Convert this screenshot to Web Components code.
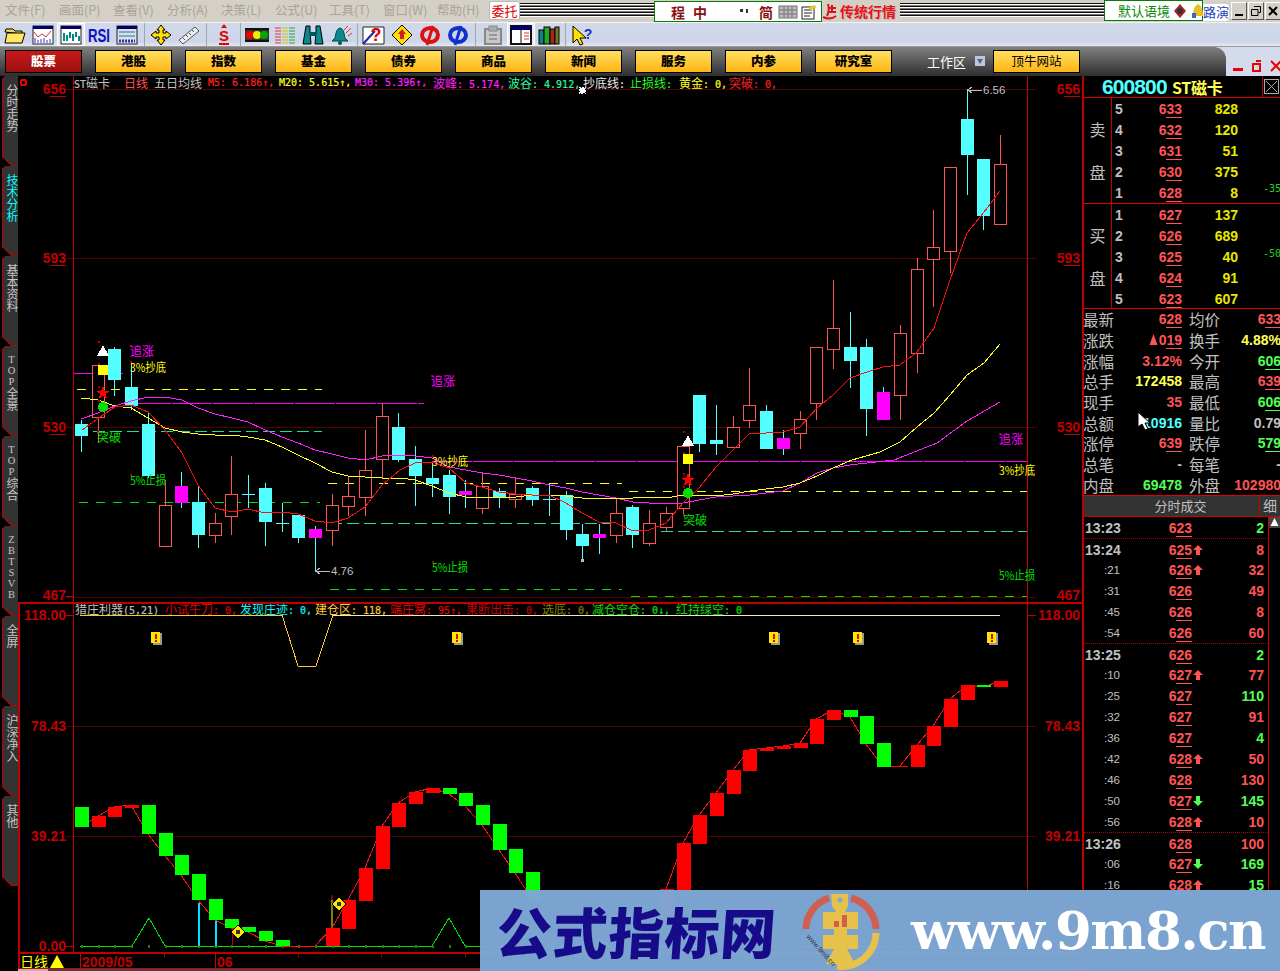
<!DOCTYPE html>
<html lang="zh">
<head>
<meta charset="utf-8">
<title>行情</title>
<style>
  html, body { margin: 0; height: 971px; overflow: hidden; background: #000; }
</style>
</head>
<body>
<tdx-app>
  <menu-bar slot="menu">
    <menu-item>文件(F)</menu-item><menu-item>画面(P)</menu-item><menu-item>查看(V)</menu-item>
    <menu-item>分析(A)</menu-item><menu-item>决策(L)</menu-item><menu-item>公式(U)</menu-item>
    <menu-item>工具(T)</menu-item><menu-item>窗口(W)</menu-item><menu-item last>帮助(H)</menu-item>
  </menu-bar>
  <tool-bar slot="tools">
    <tool-icon name="folder"></tool-icon><tool-icon name="kline"></tool-icon><tool-icon name="bars" pressed></tool-icon>
    <tool-icon name="rsi"></tool-icon><tool-icon name="table"></tool-icon><tool-sep></tool-sep>
    <tool-icon name="cross"></tool-icon><tool-icon name="ruler"></tool-icon><tool-sep w="7"></tool-sep>
    <tool-icon name="dollar"></tool-icon><tool-sep w="5"></tool-sep>
    <tool-icon name="lights"></tool-icon><tool-icon name="hatch"></tool-icon><tool-icon name="binoculars"></tool-icon>
    <tool-icon name="bell"></tool-icon><tool-sep w="5"></tool-sep>
    <tool-icon name="question"></tool-icon><tool-icon name="diamond"></tool-icon><tool-icon name="phired"></tool-icon>
    <tool-icon name="phiblue"></tool-icon><tool-sep w="7"></tool-sep>
    <tool-icon name="clip"></tool-icon><tool-icon name="window" pressed></tool-icon><tool-icon name="books"></tool-icon><tool-sep w="5"></tool-sep>
    <tool-icon name="help"></tool-icon>
  </tool-bar>
  <nav-bar slot="nav">
    <nav-button active>股票</nav-button><nav-button>港股</nav-button><nav-button>指数</nav-button>
    <nav-button>基金</nav-button><nav-button>债券</nav-button><nav-button>商品</nav-button>
    <nav-button>新闻</nav-button><nav-button>服务</nav-button><nav-button>内参</nav-button>
    <nav-button>研究室</nav-button>
  </nav-bar>
  <side-tabs slot="tabs">
    <side-tab>分时走势</side-tab><side-tab active>技术分析</side-tab><side-tab>基本资料</side-tab>
    <side-tab>TOP全景</side-tab><side-tab>TOP综合</side-tab><side-tab>ZBTSVB</side-tab>
    <side-tab>全屏</side-tab><side-tab>沪深净入</side-tab><side-tab>其他</side-tab>
  </side-tabs>
  <candle-chart slot="main"></candle-chart>
  <index-chart slot="sub"></index-chart>
  <date-bar slot="dates"></date-bar>
  <quote-panel slot="quote"></quote-panel>
  <watermark-banner slot="banner"></watermark-banner>
</tdx-app>

<script>
const CJK = '"Noto Sans CJK SC", sans-serif';

// tiny base: every element sets its shadow html in render()
class Box extends HTMLElement {
  constructor() {
    super();
    this.attachShadow({ mode: 'open' });
  }
  connectedCallback() {
    this.shadowRoot.innerHTML = this.render();
  }
}

/* ---------- shell ---------- */
class TdxApp extends Box {
  render() {
    return `<style>
      :host { display: grid; position: relative; width: 1280px; height: 971px; overflow: hidden; background: #000;
        grid-template-rows: 23px 24px 29px 1fr; font-family: ${CJK}; }
      .body { display: grid; grid-template-columns: 18px 1064px 198px; min-height: 0; }
      .charts { display: grid; grid-template-rows: 526px 350px 16px 3px; min-width: 0; }
      .banner { position: absolute; left: 480px; top: 890px; }
      .strip { background: #444; border-top: 1px solid #c00; display: flex; }
      .strip i { width: 30px; background: #b8b8b8; }
    </style>
    <slot name="menu"></slot><slot name="tools"></slot><slot name="nav"></slot>
    <div class="body">
      <slot name="tabs"></slot>
      <div class="charts">
        <slot name="main"></slot><slot name="sub"></slot><slot name="dates"></slot>
        <div class="strip"><i></i></div>
      </div>
      <slot name="quote"></slot>
    </div>
    <div class="banner"><slot name="banner"></slot></div>`;
  }
}

/* ---------- top menu ---------- */
class MenuBar extends Box {
  render() {
    const stripes = 'repeating-linear-gradient(#111 0 1px, #fff 1px 2px, #777 2px 3px)';
    return `<style>
      :host { display: flex; align-items: stretch; height: 23px; background: #d4d0c8; border-bottom: 1px solid #f4f4f4; box-sizing: border-box; padding-left: 5px; }
      .tab { width: 31px; margin: 1px 0 2px; background: #fff; border: 1px solid #bbb; border-radius: 3px 3px 0 0; color: #e00000; font-size: 13px; line-height: 18px; text-align: center; box-sizing: border-box; }
      .grip { flex: 1; margin: 3px 0 5px; background: ${stripes}; min-width: 0; }
      .grip.a { flex: none; width: 134px; }
      .lang { width: 168px; height: 21px; margin-top: 1px; box-sizing: border-box; background: #fff; border: 1px solid #0a7a0a; display: flex; align-items: center; color: #8a0f0f; font: bold 14px ${CJK}; }
      .lang span { width: 22px; text-align: center; flex: none; }
      .lang svg { flex: none; }
      .logo { width: 78px; color: #e11; font: bold 14px/20px ${CJK}; white-space: nowrap; text-shadow: 1px 1px 0 #bbb; display: flex; align-items: center; gap: 3px; }
      .ctx { width: 99px; height: 21px; box-sizing: border-box; background: #fff; border: 1px solid #0a7a0a; color: #0a8a0a; font-size: 13px; line-height: 19px; padding-left: 13px; display: flex; gap: 2px; white-space: nowrap; }
      .ctx svg { flex: none; margin-top: 2px; }
      .road { width: 26px; margin-top: 4px; height: 17px; overflow: hidden; background: #fff; color: #1a3fc0; font-size: 13px; line-height: 16px; border-radius: 0 3px 3px 0; text-align: right; white-space: nowrap; }
      .win { width: 16px; margin: 2px 0 2px 1px; box-sizing: border-box; background: #d4d0c8; border: 1px solid; border-color: #fff #555 #555 #fff; display: flex; align-items: center; justify-content: center; }
    </style>
    <slot></slot>
    <div class="tab">委托</div>
    <div class="grip a"></div>
    <div class="lang">
      <span style="margin-left:12px">程</span><span>中</span>
      <svg width="22" height="16" viewBox="0 0 22 16"><path d="M13 1a7 7 0 0 1-7 12A7 7 0 0 0 13 1z" fill="#111"/></svg>
      <svg width="22" height="16" viewBox="0 0 22 16"><path d="M7 5h3v3H7zM13 5h2v4h-2z" fill="#333"/></svg>
      <span>简</span>
      <svg width="22" height="16" viewBox="0 0 22 16"><rect x="2" y="2" width="18" height="12" fill="#bbb" stroke="#777"/><path d="M2 6h18M2 10h18M7 2v12M11 2v12M15 2v12" stroke="#777"/></svg>
      <svg width="20" height="16" viewBox="0 0 20 16"><rect x="3" y="3" width="12" height="12" fill="#fff" stroke="#222"/><path d="M5 6h8M5 9h8M5 12h6" stroke="#222"/><path d="M9 4l6-3 3 2-6 3z" fill="#e8c820"/></svg>
    </div>
    <div class="logo"><svg width="15" height="18" viewBox="0 0 15 18"><path d="M1 15c4 2 9 2 13-1M6 2c1 3 1 8-1 12M10 3v8M7 6h7M7 10h7" fill="none" stroke="#d11" stroke-width="2"/></svg><span>传统行情</span></div>
    <div class="grip"></div>
    <div class="ctx">默认语境
      <svg width="16" height="16" viewBox="0 0 16 16"><path d="M8 1l6 7-6 7-6-7z" fill="#a22"/><circle cx="8" cy="8" r="3" fill="#333"/></svg>
      <svg width="16" height="16" viewBox="0 0 16 16"><path d="M8 1c4 2 5 7 5 12H3c0-5 1-10 5-12z" fill="#e8c020"/><rect x="2" y="10" width="4" height="5" fill="#36c"/></svg>
    </div>
    <div class="road">路演</div>
    <div class="win" style="margin-left:2px"><svg width="10" height="10"><path d="M1 8h8v2H1z" fill="#000"/></svg></div>
    <div class="win"><svg width="10" height="10"><path d="M3 .5h6.5v6h-2M.5 3.5h6.5v6H.5z" fill="none" stroke="#000"/></svg></div>
    <div class="win" style="margin-right:-1px"><svg width="10" height="10"><path d="M1 1l8 8M9 1l-8 8" stroke="#000" stroke-width="2"/></svg></div>`;
  }
}
class MenuItem extends Box {
  render() {
    return `<style>:host { display: block; width: ${this.hasAttribute('last') ? 52 : 54}px; color: #a8a498; font-size: 12.5px; line-height: 20px; white-space: nowrap; }</style><slot></slot>`;
  }
}

/* ---------- toolbar ---------- */
const ICONS = {
  folder: '<path d="M2 8l1-3h7l2 2h7v3z" fill="#e8d860" stroke="#000"/><path d="M2 19l2-10h18l-3 10z" fill="#ffe860" stroke="#000"/>',
  kline: '<rect x="2" y="2" width="20" height="18" fill="#fff" stroke="#222"/><rect x="2" y="2" width="20" height="3" fill="#006"/><path d="M3 8l4 5 4-3 4 3 5-6" fill="none" stroke="#c33"/><path d="M4 14v5M7 16v3M10 15v4M13 14v5M16 16v3M19 15v4" stroke="#33c"/>',
  bars: '<rect x="2" y="2" width="20" height="18" fill="#fff" stroke="#222"/><rect x="2" y="2" width="20" height="3" fill="#006"/><path d="M5 9v8M8 11v6M11 8v6M14 10v7M17 8v5M20 12v5" stroke="#088" stroke-width="2"/>',
  rsi: '<text x="1" y="18" font-family="Liberation Sans" font-weight="bold" font-size="19" fill="#1010c0" textLength="22" lengthAdjust="spacingAndGlyphs">RSI</text>',
  table: '<rect x="2" y="2" width="20" height="18" fill="#dde" stroke="#222"/><rect x="2" y="2" width="20" height="3" fill="#006"/><path d="M4 8h16M4 12h16" stroke="#088"/><path d="M4 17h16" stroke="#33a" stroke-width="3" stroke-dasharray="2 1"/>',
  cross: '<path d="M12 1l4 5h-2v3h3V7l5 4-5 4v-2h-3v3h2l-4 5-4-5h2v-3H7v2l-5-4 5-4v2h3V6H8z" fill="#ffe000" stroke="#000"/>',
  ruler: '<path d="M2 16L18 3l4 4L6 20z" fill="#eee" stroke="#555"/><path d="M6 14l2 2M9 11l2 2M12 9l2 2M15 6l2 2" stroke="#555"/>',
  dollar: '<path d="M12 0l3 4h-6z" fill="#e00"/><text x="12" y="17" text-anchor="middle" font-family="Liberation Sans" font-weight="bold" font-size="15" fill="#e00000">S</text><path d="M7 20h10" stroke="#e00" stroke-width="2"/>',
  lights: '<rect x="0" y="4" width="24" height="2" fill="#111"/><rect x="0" y="16" width="24" height="2" fill="#111"/><rect x="0" y="6" width="24" height="10" fill="#333"/><circle cx="5" cy="11" r="4" fill="#e00"/><circle cx="12" cy="11" r="4" fill="#ee0"/><circle cx="19" cy="11" r="4" fill="#0a0"/>',
  hatch: '<path d="M3 3v17M5 3v17M7 3v17" stroke="#e33" stroke-dasharray="2 1"/><path d="M10 3v17M12 3v17M14 3v17" stroke="#cc0" stroke-dasharray="2 1"/><path d="M17 3v17M19 3v17M21 3v17" stroke="#2a2" stroke-dasharray="2 1"/>',
  binoculars: '<path d="M5 2h4v6l1 12H2L4 8z" fill="#0a8a90" stroke="#000"/><path d="M15 2h4l1 6 2 12h-8l1-12z" fill="#0a8a90" stroke="#000"/><rect x="9" y="8" width="6" height="4" fill="#055"/>',
  bell: '<path d="M11 4c-4 1-4 6-5 10l-3 3h16l-3-3c-1-4-1-9-5-10z" fill="#0a8a90" stroke="#044"/><circle cx="11" cy="19" r="2" fill="#055"/><path d="M15 6l4-4M17 9l5-5M19 12l4-3" stroke="#d33"/>',
  question: '<path d="M1 20V3h21v17z" fill="#fff" stroke="#222"/><path d="M1 20l12-13" stroke="#22a" stroke-width="2"/><text x="14" y="17" text-anchor="middle" font-family="Liberation Sans" font-weight="bold" font-size="18" fill="#e00000">?</text>',
  diamond: '<path d="M12 1l10 10-10 10L2 11z" fill="#ffe000" stroke="#000"/><path d="M12 5l4 5h-2v5h-4v-5H8z" fill="#d02020"/>',
  phired: '<ellipse cx="12" cy="11" rx="8" ry="7" fill="none" stroke="#e01010" stroke-width="4"/><path d="M15 2L9 21" stroke="#e01010" stroke-width="3"/>',
  phiblue: '<ellipse cx="12" cy="11" rx="8" ry="7" fill="none" stroke="#1030d0" stroke-width="4"/><path d="M15 2L9 21" stroke="#1030d0" stroke-width="3"/>',
  clip: '<path d="M4 5h16v15H4z" fill="#c8c8c8" stroke="#888" stroke-width="2"/><rect x="8" y="2" width="8" height="5" fill="#aaa" stroke="#888"/><path d="M8 11h8M8 15h8" stroke="#999" stroke-width="2"/>',
  window: '<rect x="2" y="2" width="20" height="18" fill="#fff" stroke="#111" stroke-width="2"/><rect x="2" y="2" width="20" height="4" fill="#006"/><path d="M15 9h5M15 12h5M15 15h5" stroke="#d33"/><path d="M12 6v14" stroke="#111"/>',
  books: '<rect x="2" y="6" width="5" height="14" fill="#088" stroke="#000"/><rect x="7" y="3" width="6" height="17" fill="#2a2" stroke="#000"/><rect x="13" y="5" width="5" height="15" fill="#a22" stroke="#000"/><rect x="18" y="3" width="4" height="17" fill="#772" stroke="#000"/>',
  help: '<path d="M3 2v17l4-4 3 6 3-1-3-6h6z" fill="#ffe000" stroke="#000"/><text x="18" y="15" text-anchor="middle" font-family="Liberation Sans" font-weight="bold" font-size="14" fill="#1030c0">?</text>'
};
class ToolBar extends Box {
  render() {
    return `<style>:host { display: flex; align-items: stretch; height: 24px; padding-left: 1px; box-sizing: border-box;
      background: linear-gradient(#d0d8ea, #cdd5e8 80%, #e6e8f0); border-bottom: 1px solid #999; }</style><slot></slot>`;
  }
}
class ToolIcon extends Box {
  render() {
    const pressed = this.hasAttribute('pressed');
    return `<style>:host { display: flex; width: 28px; align-items: center; justify-content: center; box-sizing: border-box;
      ${pressed ? 'background:#e8ecf2; border:1px solid #fff;' : ''} }</style>
      <svg width="24" height="22" viewBox="0 0 24 22">${ICONS[this.getAttribute('name')] || ''}</svg>`;
  }
}
class ToolSep extends Box {
  render() {
    return `<style>:host { display: block; width: ${this.getAttribute('w') || 6}px; }
      i { display: block; width: 1px; height: 100%; background: #9aa; margin: 0 auto; }</style><i></i>`;
  }
}

/* ---------- nav bar ---------- */
class NavBar extends Box {
  render() {
    return `<style>
      :host { display: flex; height: 29px; background: #d4dbec; }
      .strip { flex: 1; display: flex; align-items: center; gap: 13px; padding-left: 5px; padding-bottom: 1px; box-sizing: border-box; border-top-right-radius: 12px;
        background: linear-gradient(#808080, #2e2e2e); color: #fff; font-size: 13px; }
      .zone { width: 58px; margin-left: 22px; margin-right: -13px; white-space: nowrap; display: flex; align-items: center; gap: 9px; }
      .caps { width: 54px; display: flex; align-items: center; gap: 9px; padding: 9px 0 0 7px; box-sizing: border-box; }
    </style>
    <div class="strip">
      <slot></slot>
      <div class="zone">工作区<svg width="10" height="10"><rect width="10" height="10" fill="#bcc8e0"/><path d="M2 3h6L5 8z" fill="#567"/></svg></div>
      <nav-button style="margin-left:8px">顶牛网站</nav-button>
    </div>
    <div class="caps">
      <svg width="12" height="12"><rect y="8" width="12" height="3" fill="#e00"/></svg>
      <svg width="12" height="12"><path d="M1 4h7v7H1zM4 1h7v6" fill="none" stroke="#e00" stroke-width="2"/></svg>
      <svg width="12" height="12"><path d="M1 1l10 10M11 1L1 11" stroke="#e00" stroke-width="2"/></svg>
    </div>`;
  }
}
class NavButton extends Box {
  render() {
    const on = this.hasAttribute('active');
    const wide = this.textContent === '顶牛网站';
    return `<style>:host { display: block; width: ${wide ? 87 : 77}px; height: 23px; box-sizing: border-box; border: 1px solid #000;
      text-align: center; line-height: 20px; font-size: 12.5px; font-weight: ${wide ? 400 : 900}; white-space: nowrap;
      color: ${on ? '#fff' : '#000'};
      background: ${on ? 'linear-gradient(#c81818, #9a1010)' : 'linear-gradient(#ffe060, #ffb414)'}; }</style><slot></slot>`;
  }
}

/* ---------- left tabs ---------- */
class SideTabs extends Box {
  render() {
    return `<style>:host { display: block; background: #000; padding-left: 2px; overflow: hidden; }</style><slot></slot>`;
  }
}
class SideTab extends Box {
  render() {
    const on = this.hasAttribute('active');
    const label = this.textContent.replace(/[A-Z]+/, '<span>$&</span>');
    return `<style>
      :host { display: block; width: 16px; height: 90px; background: #c00000;
        clip-path: polygon(3px 0, 100% 0, 100% 100%, 9px 100%, 0 81px, 0 3px); }
      .in { height: 89px; margin-left: 1px; padding-top: 8px; box-sizing: border-box; background: #333;
        clip-path: polygon(2px 0, 100% 0, 100% 100%, 9px 100%, 0 81px, 0 3px);
        color: ${on ? '#00ffff' : '#c4c4c4'}; writing-mode: vertical-rl; text-orientation: upright;
        font: 12px/15px "Liberation Serif", "Noto Sans CJK SC", serif; white-space: nowrap; }
      span { font-size: 10.5px; }
    </style>
    <div class="in">${label}</div>`;
  }
}

/* ---------- chart data, screen coordinates ---------- */
const X0 = 81, DX = 16.71;
const cx = i => Math.round(X0 + DX * i);
// type, high, body top, body bottom, low
const KLINE = [
  ['c',420,424,436,452],['r',365,365,417,442],['c',347,349,380,396],['c',362,387,406,410],['c',413,424,476,478],
  ['r',480,505,546,546],['m',472,486,503,508],['c',486,502,535,548],['r',513,523,535,543],['r',456,494,516,535],
  ['c',475,494,495,508],['c',483,488,522,546],['c',503,523,524,532],['c',515,515,538,543],['m',526,529,538,572],
  ['r',494,505,530,546],['r',477,496,506,516],['r',430,470,497,516],['r',403,416,459,478],['c',413,427,460,462],
  ['c',446,459,476,506],['c',462,478,484,497],['c',470,475,497,514],['m',480,491,495,508],['r',472,486,508,514],
  ['c',488,491,497,508],['r',478,494,499,508],['c',486,488,500,506],['c',484,499,500,516],['c',491,495,530,540],
  ['c',524,534,546,561],['m',524,534,538,554],['r',499,513,535,543],['c',505,507,535,548],['r',510,523,543,546],
  ['r',507,513,527,531],['r',446,446,508,514],['c',395,395,444,452],['c',405,440,444,455],['r',416,427,447,447],
  ['r',368,405,420,428],['c',405,411,449,449],['m',430,438,449,455],['r',411,419,433,449],['r',347,347,403,420],
  ['r',280,328,349,369],['c',312,347,361,388],['c',339,347,409,436],['m',387,392,420,420],['r',325,333,395,420],
  ['r',258,269,353,373],['r',210,247,259,307],['r',167,167,251,273],['c',89,119,155,195],['c',159,159,216,230],
  ['r',135,164,224,224]
];
const M5 = [[82,430],[100,417],[115,407],[131,405],[148,412],[165,430],[182,453],[198,485],[215,508],[232,512],[248,509],[265,513],[282,512],[298,514],[315,521],[332,523],[348,518],[365,507],[382,485],[400,470],[415,463],[432,462],[449,468],[466,483],[482,487],[499,492],[516,494],[532,495],[549,495],[566,503],[582,513],[599,522],[616,523],[633,531],[649,530],[666,523],[683,503],[699,488],[716,467],[733,450],[750,433],[766,433],[783,432],[800,427],[817,408],[833,395],[850,378],[867,372],[883,367],[900,365],[917,352],[934,328],[950,280],[967,233],[984,212],[1000,191]];
const M20 = [[81,398],[98,400],[115,406],[131,408],[148,418],[165,428],[182,432],[198,434],[215,435],[232,435],[248,437],[265,440],[282,447],[298,455],[315,463],[332,472],[348,476],[365,477],[382,478],[400,478],[415,480],[432,486],[449,493],[466,497],[482,497],[499,497],[516,497],[532,495],[549,495],[566,496],[582,498],[599,498],[616,499],[633,498],[649,497],[666,498],[683,495],[699,495],[716,496],[733,494],[750,491],[766,489],[783,487],[800,483],[817,476],[833,468],[852,460],[880,452],[900,442],[917,427],[934,413],[950,395],[967,375],[984,363],[1000,344]];
const M30 = [[81,419],[98,413],[115,406],[131,401],[148,397],[165,397],[182,400],[198,408],[215,414],[232,418],[248,422],[265,430],[282,437],[298,443],[315,450],[332,454],[348,458],[365,460],[382,456],[399,455],[415,456],[432,458],[449,467],[466,470],[482,473],[499,475],[516,478],[532,481],[549,485],[566,488],[582,492],[599,495],[616,498],[633,502],[649,503],[666,504],[683,503],[699,500],[716,497],[733,496],[750,495],[766,493],[783,491],[800,483],[817,473],[833,468],[850,465],[867,463],[894,460],[937,443],[967,421],[1000,402]];
// colour g/r, top, bottom (lower pane, index = candle index)
const STACK = [
  ['g',807,827],['r',816,827],['r',807,817],['r',805,808],['g',805,834],['g',833,856],['g',855,875],['g',874,900],['g',899,920],['g',919,928],
  ['g',927,932],['g',931,941],['g',940,946],null,null,['r',928,946],['r',900,929],['r',868,901],['r',826,869],['r',803,827],
  ['r',792,804],['r',788,793],['g',788,794],['g',793,806],['g',805,825],['g',824,850],['g',849,873],['g',872,899],null,null,
  null,null,null,null,null,['r',889,925],['r',843,890],['r',815,844],['r',793,816],['r',770,794],
  ['r',750,771],['r',748,751],['r',746,749],['r',743,748],['r',719,744],['r',710,720],['g',710,717],['g',716,744],['g',743,767],['r',766,767],
  ['r',745,767],['r',726,746],['r',699,727],['r',685,700],['g',685,687],['r',681,687]
];

const poly = (pts, color) => `<polyline points="${pts.map(p => p.join(',')).join(' ')}" fill="none" stroke="${color}"/>`;
const dash = (y, a, b, color, on = 9, off = 8) => `<line x1="${a}" y1="${y}.5" x2="${b}" y2="${y}.5" stroke="${color}" stroke-dasharray="${on} ${off}"/>`;
const starPath = (x, y, r) => {
  let d = '';
  for (let i = 0; i < 10; i++) {
    const a = -Math.PI / 2 + i * Math.PI / 5, q = i % 2 ? r * .42 : r;
    d += (i ? 'L' : 'M') + (x + q * Math.cos(a)).toFixed(1) + ' ' + (y + q * Math.sin(a)).toFixed(1);
  }
  return d + 'z';
};
const axisNum = (x, y, txt, under) => {
  const line = under ? `<rect x="${x - 16}" y="${y + 7}" width="16" height="1" fill="#c00000"/>` : '';
  return `<text x="${x}" y="${y + 5}" text-anchor="end" font-family="Liberation Sans" font-weight="bold" font-size="14" fill="#c00000">${txt}</text>${line}`;
};

const titleCss = `
  .title { position: relative; display: flex; height: 13px; padding-left: 56px; font: 10px/13px "DejaVu Sans Mono", "Noto Sans CJK SC", monospace; white-space: nowrap; -webkit-text-stroke: .2px; }
  .title span { display: block; flex: none; }
  .title i { font: normal 12px/13px ${CJK}; -webkit-text-stroke: 0; }
  svg { position: absolute; left: 0; top: 0; }
`;
const titleItems = items => items.map(([t, w, c]) =>
  `<span style="width:${w}px;color:${c}">${t.replace(/[\u4e00-\u9fff]+/g, '<i>$&</i>')}</span>`).join('');

/* ---------- main pane ---------- */
class CandleChart extends Box {
  render() {
    const CY = '#54ffff', RD = '#ff5454', MG = '#ff00ff';
    let g = '';
    // horizontal grid and axes
    for (const y of [89, 258, 427, 597]) g += `<line x1="66" x2="1036" y1="${y}.5" y2="${y}.5" stroke="#560000"/>`;
    g += `<line x1="73.5" x2="73.5" y1="76" y2="602" stroke="#c00000"/><line x1="1027.5" x2="1027.5" y1="76" y2="602" stroke="#c00000"/>`;
    // level lines
    g += `<line x1="74" x2="123" y1="373.5" y2="373.5" stroke="${MG}"/>`;
    g += dash(403, 131, 424, MG, 40, 1) + dash(461, 432, 1027, MG, 40, 1);
    g += dash(389, 77, 322, '#ffff00') + dash(483, 328, 622, '#ffff00') + dash(491, 629, 1027, '#ffff00');
    g += dash(431, 76, 322, '#20e0a0', 12, 5) + dash(523, 330, 622, '#20e0a0', 12, 5) + dash(531, 661, 1027, '#20e0a0', 12, 5);
    g += dash(502, 79, 320, '#00e000') + dash(589, 330, 622, '#00e000') + dash(596, 631, 1027, '#00e000');
    // candles
    KLINE.forEach(([t, hi, top, bot, lo], i) => {
      const x = cx(i), c = t === 'c' ? CY : t === 'm' ? MG : RD;
      const wick = t === 'm' ? CY : c;
      if (t === 'r') {
        g += `<line x1="${x}.5" x2="${x}.5" y1="${hi}" y2="${top}" stroke="${c}"/><line x1="${x}.5" x2="${x}.5" y1="${bot}" y2="${lo}" stroke="${c}"/>`;
        g += `<rect x="${x - 6}.5" y="${top}.5" width="12" height="${bot - top}" fill="#000" stroke="${c}"/>`;
      } else {
        g += `<line x1="${x}.5" x2="${x}.5" y1="${hi}" y2="${lo}" stroke="${wick}"/>`;
        g += `<rect x="${x - 6}" y="${top}" width="13" height="${Math.max(1, bot - top)}" fill="${c}"/>`;
      }
    });
    // moving averages
    g += poly(M30, '#ff20ff') + poly(M20, '#ffff20') + poly(M5, '#ff1010');
    // signal stacks
    for (const [x, y] of [[103, 351], [688, 441]]) {
      const s = y === 351 ? [370, 393, 407] : [459, 480, 493];
      g += `<path d="M${x} ${y - 6}l6 11h-12z" fill="#fff"/>`;
      g += `<rect x="${x - 5}" y="${s[0] - 5}" width="10" height="10" fill="#ffff00"/>`;
      g += `<path d="${starPath(x, s[1], 7)}" fill="#f00"/>`;
      g += `<circle cx="${x}" cy="${s[2]}" r="5" fill="#00e000"/>`;
      g += `<path d="M${x - 5} ${y - 10}h2v2h-2zM${x - 5} ${s[0] - 7}h2v2h-2zM${x - 5} ${s[1] - 7}h2v2h-2zM${x - 5} ${s[2] - 7}h2v2h-2z" fill="#a00"/>`;
    }
    // small red markers and signal labels, half width latin like the bitmap font
    const label = (x, y, t, c) => {
      const w = [...t].reduce((n, ch) => n + (ch.charCodeAt(0) > 255 ? 12 : 6), 0);
      return `<rect x="${x}" y="${y - 11}" width="2" height="2" fill="#a00"/><text x="${x}" y="${y}" fill="${c}" font-family="Noto Sans CJK SC" font-size="12" textLength="${w}" lengthAdjust="spacingAndGlyphs">${t}</text>`;
    };
    g += label(130, 356, '追涨', '#ff00ff') + label(130, 372, '3%抄底', '#ffff00') + label(97, 442, '突破', '#00e000') + label(130, 485, '5%止损', '#00e000');
    g += label(431, 386, '追涨', '#ff00ff') + label(432, 466, '3%抄底', '#ffff00') + label(432, 572, '5%止损', '#00e000') + label(683, 525, '突破', '#00e000');
    g += label(999, 444, '追涨', '#ff00ff') + label(999, 475, '3%抄底', '#ffff00') + label(999, 580, '5%止损', '#00e000');
    // price extremes
    const ext = (x, y, t) => `<path d="M${x} ${y}h14M${x} ${y}l4-3M${x} ${y}l4 3" stroke="#c0c0c0" fill="none"/><text x="${x + 15}" y="${y + 4}" fill="#c0c0c0" font-family="Liberation Sans" font-size="11.5">${t}</text>`;
    g += ext(316, 571, '4.76') + ext(968, 90, '6.56');
    g += `<rect x="581" y="559" width="3" height="3" fill="#bbb"/>`;
    g += `<path d="M583 86l1 2 2-1-1 3 2 1-2 1 1 2-3-1-1 2-1-2-2 1 1-3-2-1 2-1-1-2 3 1z" fill="#fff"/>`;
    g += `<path d="M21 79h5v1h1v5h-1v1h-5v-1h-1v-5h1z" fill="#e00"/><rect x="22" y="81" width="3" height="3" fill="#000"/>`;
    // axis labels and ticks
    for (const [y, t] of [[89, '656'], [258, '593'], [427, '530'], [595, '467']]) {
      g += axisNum(66, y, t, y !== 595);
      g += axisNum(1080, y, t, y !== 595);
    }
    g += `<line x1="66" x2="74" y1="596.5" y2="596.5" stroke="#c00000"/>`;
    return `<style>:host { display: block; position: relative; overflow: hidden; background: #000; }
      ${titleCss}
      .title { z-index: 1; }
    </style>
    <svg width="1064" height="526" viewBox="18 76 1064 526" shape-rendering="crispEdges">${g}</svg>
    <div class="title">${titleItems([
      ['ST磁卡', 50, '#c0c0c0'], ['日线', 30, '#ff5454'], ['五日均线', 54, '#c0c0c0'],
      ['M5: 6.186↑,', 71, '#ff2020'], ['M20: 5.615↑,', 76, '#ffff20'], ['M30: 5.396↑,', 78, '#ff20ff'],
      ['波峰: 5.174,', 75, '#ff20ff'], ['波谷: 4.912,', 75, '#20ffa0'], ['抄底线:', 47, '#e8e8e8'],
      ['止损线:', 49, '#20ff20'], ['黄金: 0,', 50, '#ffff20'], ['突破: 0,', 60, '#ff2020']
    ])}</div>`;
  }
}

/* ---------- lower pane ---------- */
class IndexChart extends Box {
  render() {
    let g = '';
    for (const y of [726, 836]) g += `<line x1="66" x2="1036" y1="${y}.5" y2="${y}.5" stroke="#560000"/>`;
    g += `<line x1="66" x2="74" y1="615.5" y2="615.5" stroke="#c00000"/><line x1="1027" x2="1036" y1="615.5" y2="615.5" stroke="#c00000"/><line x1="66" x2="74" y1="946.5" y2="946.5" stroke="#c00000"/>`;
    g += `<line x1="73.5" x2="73.5" y1="602" y2="952" stroke="#c00000"/><line x1="1027.5" x2="1027.5" y1="602" y2="952" stroke="#c00000"/>`;
    // orange top line with the V dip
    g += `<polyline points="80,615 282,615 298,666 316,666 333,615 1000,615" fill="none" stroke="#ffc830"/><line x1="333" x2="1000" y1="615.5" y2="615.5" stroke="#f0e8c0"/>`;
    // baseline, humps and stems
    g += `<polyline points="80,946 132,946 149,918 165,946 432,946 449,918 465,946 1000,946" fill="none" stroke="#00e000"/>`;
    for (let i = 0; i < 56; i++) g += `<rect x="${cx(i)}" y="945" width="2" height="3" fill="#208020"/>`;
    g += `<line x1="198.5" x2="198.5" y1="903" y2="946" stroke="#00e0ff" stroke-width="2"/><line x1="215.5" x2="215.5" y1="920" y2="946" stroke="#00e0ff" stroke-width="2"/>`;
    g += `<line x1="232" x2="232" y1="928" y2="946" stroke="#c00000"/>`;
    g += `<rect x="331" y="896" width="2" height="50" fill="#808000"/><rect x="331" y="895" width="2" height="5" fill="#800000"/>`;
    // thin close line
    const closes = [];
    STACK.forEach((b, i) => {
      closes.push([cx(i), b ? (b[0] === 'r' ? b[1] : b[2]) : 946]);
    });
    const a = closes.slice(0, 28), z = closes.slice(35);
    g += `<polyline points="${a.map(p => p.join(',')).join(' ')} 610,946 650,946 ${z.map(p => p.join(',')).join(' ')}" fill="none" stroke="#ff1010"/>`;
    // bars
    STACK.forEach((b, i) => {
      if (!b) return;
      g += `<rect x="${cx(i) - 6}" y="${b[1]}" width="14" height="${b[2] - b[1]}" fill="${b[0] === 'r' ? '#ff0000' : '#00ff00'}"/>`;
    });
    // warning flags
    for (const x of [156, 457, 774, 858, 992]) {
      g += `<rect x="${x - 3}" y="633" width="9" height="12" fill="#999"/><rect x="${x - 5}" y="632" width="9" height="11" fill="#ffe800"/><rect x="${x - 1}" y="634" width="2" height="5" fill="#e00"/><rect x="${x - 1}" y="640" width="2" height="2" fill="#e00"/>`;
    }
    // diamonds
    for (const [x, y] of [[238, 932], [339, 904]]) {
      g += `<path d="M${x} ${y - 7}l7 7-7 7-7-7z" fill="#ffe800" stroke="#000"/><path d="M${x - 2} ${y - 2}h4v4h-4z" fill="#333"/>`;
    }
    for (const [y, t] of [[615, '118.00'], [726, '78.43'], [836, '39.21'], [946, '0.00']]) {
      g += axisNum(66, y, t);
      if (y !== 946) g += axisNum(1080, y, t);
    }
    return `<style>:host { display: block; position: relative; overflow: hidden; background: #000;
        border-top: 2px solid #c00000; border-left: 2px solid #c00000; box-sizing: border-box; }
      ${titleCss}
      svg { left: -2px; top: -2px; }
      .title { z-index: 1; padding-left: 55px; margin-top: -2px; }
    </style>
    <svg width="1064" height="350" viewBox="18 602 1064 350" shape-rendering="crispEdges">${g}</svg>
    <div class="title">${titleItems([
      ['猎庄利器(5,21)', 90, '#c0c0c0'], ['小试牛刀: 0,', 75, '#e00000'], ['发现庄迹: 0,', 75, '#00ffff'],
      ['建仓区: 118,', 75, '#ffc830'], ['端庄窝: 95↑,', 76, '#e80000'], ['果断出击: 0,', 76, '#c00000'],
      ['选底: 0,', 50, '#808000'], ['减仓空仓: 0↓,', 84, '#00e000'], ['红持绿空: 0', 80, '#00e000']
    ])}</div>`;
  }
}

/* ---------- dates ---------- */
class DateBar extends Box {
  render() {
    const ticks = [164, 298, 381, 465].map(x => `<line x1="${x - 81}.5" x2="${x - 81}.5" y1="0" y2="3" stroke="#a00"/>`).join('');
    return `<style>
      :host { display: grid; grid-template-columns: 61px 1fr; background: #000; border-top: 2px solid #c00000; box-sizing: border-box; height: 16px; border-left: 2px solid #c00000; }
      .kind { color: #ffff00; font-size: 14px; line-height: 14px; display: flex; align-items: center; gap: 1px; border-right: 1px solid #c00; white-space: nowrap; }
      .dates { position: relative; overflow: hidden; }
      svg { position: absolute; left: 0; top: 0; }
    </style>
    <div class="kind">日线<svg style="position:static" width="16" height="13"><path d="M8 0l7 13H1z" fill="#ffff00"/></svg></div>
    <div class="dates"><svg width="1000" height="14" shape-rendering="crispEdges">
      ${ticks}<line x1="134.5" x2="134.5" y1="0" y2="14" stroke="#c00"/>
      <text x="1" y="13" font-family="Liberation Sans" font-size="14" font-weight="bold" fill="#c00000">2009/05</text>
      <text x="136" y="13" font-family="Liberation Sans" font-size="14" font-weight="bold" fill="#c00000">06</text>
    </svg></div>`;
  }
}

/* ---------- right panel ---------- */
const NUM = `"Liberation Sans", sans-serif`;
const RED = '#ff5454', GRN = '#54ff54', YEL = '#e8e800', CYAN = '#54ffff';
const px = p => `${p[0]}<u>${p.slice(1)}</u>`;

class QuotePanel extends Box {
  render() {
    const sell = [[5,633,828],[4,632,120],[3,631,51],[2,630,375],[1,628,8]];
    const buy = [[1,627,137],[2,626,689],[3,625,40],[4,624,91],[5,623,607]];
    const bookRow = ([n, p, v], i, side) => `<book-row n="${n}" price="${p}" vol="${v}" note="${side === 's' && i === 4 ? '-35' : side === 'b' && i === 2 ? '-50' : ''}"></book-row>`;
    const stats = [
      ['最新','628',RED,1,'均价','633',RED,1],['涨跌','▲019',RED,1,'换手','4.88%','#ffff54',0],['涨幅','3.12%',RED,0,'今开','606',GRN,1],
      ['总手','172458','#ffff54',0,'最高','639',RED,1],['现手','35',RED,0,'最低','606',GRN,1],['总额','10916',CYAN,0,'量比','0.79','#c0c0c0',0],
      ['涨停','639',RED,1,'跌停','579',GRN,1],['总笔','-','#c0c0c0',0,'每笔','-','#c0c0c0',0],['内盘','69478',GRN,0,'外盘','102980',RED,0]
    ];
    const trades = [
      ['13:23','623','', '2',GRN],['13:24','625','u','8',RED,1],[':21','626','u','32',RED],[':31','626','','49',RED],[':45','626','','8',RED],[':54','626','','60',RED],
      ['13:25','626','','2',GRN,1],[':10','627','u','77',RED],[':25','627','','110',GRN],[':32','627','','91',RED],[':36','627','','4',GRN],[':42','628','u','50',RED],
      [':46','628','','130',RED],[':50','627','d','145',GRN],[':56','628','u','10',RED],['13:26','628','','100',RED,1],[':06','627','d','169',GRN],[':16','628','u','15',GRN]
    ];
    return `<style>
      :host { display: block; position: relative; overflow: hidden; background: #000; color: #c0c0c0; border-left: 2px solid #c00000; box-sizing: border-box; width: 198px; }
      .head { height: 22px; box-sizing: border-box; border-bottom: 1px solid #e00000; display: flex; align-items: center; padding-left: 18px; }
      .code { font: bold 21px/22px "Liberation Sans", sans-serif; color: ${CYAN}; letter-spacing: -.9px; width: 70px; }
      .name { color: #ffff54; font: bold 16px/22px ${CJK}; white-space: nowrap; flex: 1; letter-spacing: -.3px; }
      .x { width: 18px; height: 21px; box-sizing: border-box; border-left: 1px solid #a00; display: flex; align-items: center; justify-content: center; }
      .side { display: grid; grid-template-columns: 28px 1fr; height: 106px; box-sizing: border-box; border-bottom: 1px solid #e00000; }
      .side.two { height: 105px; }
      .side b { font: 400 16px ${CJK}; border-right: 1px solid #c00000; display: flex; flex-direction: column; justify-content: space-around; align-items: center; padding: 10px 0; box-sizing: border-box; color: #c0c0c0; }
      .stats { height: 187px; box-sizing: border-box; border-bottom: 1px solid #e00000; margin-left: -1px; }
      .bar { height: 21px; box-sizing: border-box; background: #333; display: flex; border-bottom: 1px solid #c00; }
      .bar span { flex: 1; text-align: center; font-size: 13px; line-height: 19px; padding-left: 18px; }
      .bar i { width: 20px; border-left: 1px solid #c00; font: 14px/19px ${CJK}; text-align: center; }
      .list { display: grid; grid-template-columns: 1fr 12px; }
      .scroll { border-left: 1px solid #c00; display: block; height: 460px; }
      .scroll svg { display: block; }
      .cursor { position: absolute; left: 53px; top: 336px; }
    </style>
    <div class="head">
      <span class="code">600800</span><span class="name">ST磁卡</span>
      <span class="x"><svg width="15" height="15" shape-rendering="crispEdges"><rect x=".5" y=".5" width="14" height="14" fill="none" stroke="#aaa"/><path d="M2 2l11 11M13 2L2 13" stroke="#aaa"/></svg></span>
    </div>
    <div class="side"><b><span>卖</span><span>盘</span></b><div>${sell.map((r, i) => bookRow(r, i, 's')).join('')}</div></div>
    <div class="side two"><b><span>买</span><span>盘</span></b><div>${buy.map((r, i) => bookRow(r, i, 'b')).join('')}</div></div>
    <div class="stats">${stats.map(s => `<stat-row data-v='${JSON.stringify(s)}'></stat-row>`).join('')}</div>
    <div class="bar"><span>分时成交</span><i>细</i></div>
    <div class="list">
      <div>${trades.map(t => `<trade-row data-v='${JSON.stringify(t)}'></trade-row>`).join('')}</div>
      <div class="scroll"><svg width="11" height="11"><rect width="11" height="11" fill="#444"/><path d="M5.5 1l4 8h-8z" fill="#fff"/></svg></div>
    </div>
    <svg class="cursor" width="14" height="20" viewBox="0 0 14 20"><path d="M1 0v15l4-3 3 6 3-1-3-6h5z" fill="#fff" stroke="#000"/></svg>`;
  }
}
class BookRow extends Box {
  render() {
    const a = n => this.getAttribute(n);
    const note = a('note');
    return `<style>
      :host { display: grid; grid-template-columns: 12px 55px 56px 1fr; height: 21px; align-items: center; box-sizing: border-box; padding: 1px 0 0 3px; font: bold 14px/20px ${NUM}; white-space: nowrap; }
      .n { color: #c0c0c0; }
      .p { color: ${RED}; text-align: right; }
      .v { color: ${YEL}; text-align: right; }
      .x { color: #20d020; font: 10px/12px "DejaVu Sans Mono", monospace; padding-left: 25px; margin-top: ${note === '-35' ? -8 : -6}px; overflow: hidden; }
      u { text-decoration: none; border-bottom: 1px solid ${RED}; padding-bottom: 0; }
    </style>
    <span class="n">${a('n')}</span><span class="p">${px(a('price'))}</span><span class="v">${a('vol')}</span><span class="x">${note}</span>`;
  }
}
class StatRow extends Box {
  render() {
    const [l1, v1, c1, u1, l2, v2, c2, u2] = JSON.parse(this.dataset.v);
    const tri = `<svg width="9" height="11" viewBox="0 0 9 11" style="margin-right:1px"><path d="M4.5 0l4 11H.5z" fill="${RED}"/></svg>`;
    const val = (v, u) => u ? (v[0] === '▲' ? `${tri}${px(v.slice(1))}` : px(v)) : v;
    return `<style>
      :host { display: grid; grid-template-columns: 31px 68px 7px 32px 60px; height: 20.7px; align-items: center; font: 15.5px/20px ${CJK}; color: #c0c0c0; white-space: nowrap; }
      .v { font: bold 14px/20px ${NUM}; text-align: right; overflow: visible; }
      u { text-decoration: none; border-bottom: 1px solid; padding-bottom: 0; }
    </style>
    <span>${l1}</span><span class="v" style="color:${c1}">${val(v1, u1)}</span><span></span>
    <span>${l2}</span><span class="v" style="color:${c2}">${val(v2, u2)}</span>`;
  }
}
class TradeRow extends Box {
  render() {
    const [time, price, dir, vol, color, sep] = JSON.parse(this.dataset.v);
    const arrow = dir ? `<svg width="10" height="10" viewBox="0 0 10 10"><path d="${dir === 'u' ? 'M5 0l5 5H7v5H3V5H0z' : 'M5 10l5-5H7V0H3v5H0z'}" fill="${dir === 'u' ? RED : GRN}"/></svg>` : '';
    const full = time.length > 3;
    return `<style>
      :host { display: grid; grid-template-columns: 35px 72px 10px 62px; height: 21px; box-sizing: border-box; align-items: center; padding: 1px 0 0 1px; font: bold 14px/20px ${NUM}; white-space: nowrap;
        ${sep ? 'border-top: 1px dotted #a00;' : ''} }
      .t { color: #c0c0c0; text-align: right; ${full ? '' : 'font: 400 11.5px/20px ' + NUM + ';'} }
      .p { color: ${RED}; text-align: right; }
      svg { margin-left: 1px; display: block; }
      .v { color: ${color}; text-align: right; }
      u { text-decoration: none; border-bottom: 1px solid ${RED}; padding-bottom: 0; }
    </style>
    <span class="t">${time}</span><span class="p">${px(price)}</span><span>${arrow}</span><span class="v">${vol}</span>`;
  }
}

/* ---------- watermark ---------- */
class WatermarkBanner extends Box {
  render() {
    return `<style>
      :host { display: flex; align-items: center; width: 800px; height: 81px; background: rgba(126,168,214,.97); padding-left: 17px; box-sizing: border-box; overflow: hidden; }
      .cn { font: 900 55px/81px ${CJK}; color: #170b8a; width: 280px; white-space: nowrap; letter-spacing: 1px; transform: skewX(-4deg); }
      svg { flex: none; margin-left: 24px; }
      .url { margin-left: 30px; color: #fff; font: 700 53px/81px "DejaVu Serif", serif; white-space: nowrap; letter-spacing: -1.5px; }
    </style>
    <span class="cn">公式指标网</span>
    <svg width="80" height="79" viewBox="0 0 80 79">
      <path d="M5 38A33 33 0 0 1 28 7" fill="none" stroke="#d05f4f" stroke-width="7"/>
      <path d="M50 7A33 33 0 0 1 75 38" fill="none" stroke="#d05f4f" stroke-width="7"/>
      <path d="M75 42A34 34 0 0 1 36 75" fill="none" stroke="#e6c24a" stroke-width="7"/>
      <path d="M30 3h17v12l-3 6h13v17H46v6h11v14H46l8 15H25l8-15H22V44h11v-6H22V21h13l-4-6z" fill="#e6c24a"/>
      <circle cx="39" cy="9" r="2.5" fill="#7ea8d6"/>
      <path d="M33 30h5v6h-5zM41 24h5v12h-5z" fill="#d05f4f"/>
      <text x="5" y="46" font-family="Liberation Sans" font-size="7" fill="#333" transform="rotate(48 5 46)">www.9m8.cn</text>
    </svg>
    <span class="url">www.9m8.cn</span>`;
  }
}

customElements.define('tdx-app', TdxApp);
customElements.define('menu-bar', MenuBar);
customElements.define('menu-item', MenuItem);
customElements.define('tool-bar', ToolBar);
customElements.define('tool-icon', ToolIcon);
customElements.define('tool-sep', ToolSep);
customElements.define('nav-bar', NavBar);
customElements.define('nav-button', NavButton);
customElements.define('side-tabs', SideTabs);
customElements.define('side-tab', SideTab);
customElements.define('candle-chart', CandleChart);
customElements.define('index-chart', IndexChart);
customElements.define('date-bar', DateBar);
customElements.define('quote-panel', QuotePanel);
customElements.define('book-row', BookRow);
customElements.define('stat-row', StatRow);
customElements.define('trade-row', TradeRow);
customElements.define('watermark-banner', WatermarkBanner);
</script>
</body>
</html>
